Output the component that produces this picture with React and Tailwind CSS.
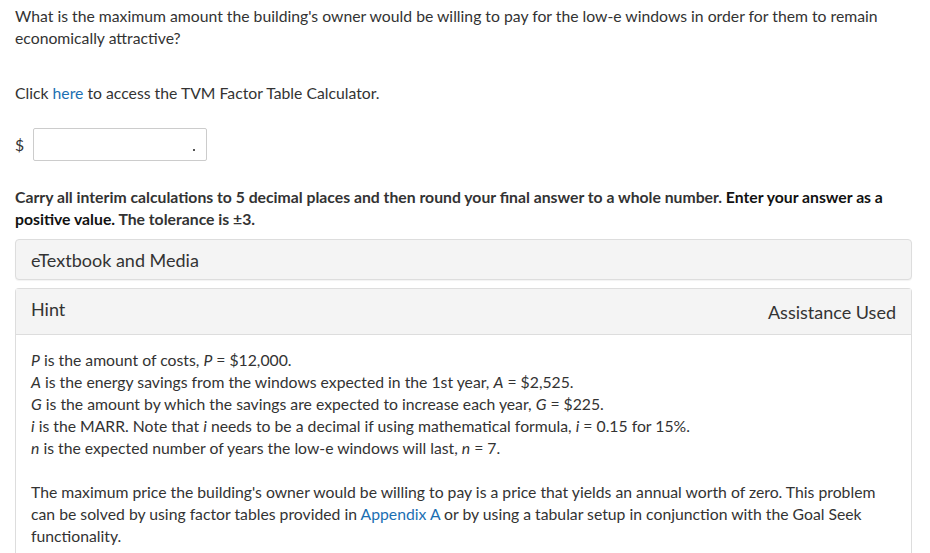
import React from 'react';

const Link = ({ children }) => (
  <a href="#" className="text-[#1b6fb3]">{children}</a>
);

export default function App() {
  return (
    <div className="min-h-screen bg-white px-[15px] pt-[5px] font-['Lato','Liberation_Sans',sans-serif] text-[15.75px] leading-[22px] text-[#333]">
      <p className="pr-[30px]">
        What is the maximum amount the building's owner would be willing to pay for the low-e windows in order for them to remain economically attractive?
      </p>

      <p className="mt-[33px]">
        Click <Link>here</Link> to access the TVM Factor Table Calculator.
      </p>

      <div className="mt-[24px] flex items-center gap-[10px]">
        <span className="w-[8px]">$</span>
        <div className="relative h-[33px] w-[174px] rounded-[2px] border border-[#ccc] bg-white">
          <span className="absolute right-[11px] top-[20px] h-[2px] w-[2px] bg-[#555]" />
        </div>
      </div>

      <p className="mt-[25px] pr-[10px] font-bold">
        Carry all interim calculations to 5 decimal places and then round your final answer to a whole number.{' '}
        <span className="text-[#111]">Enter your answer as a positive value.</span> The tolerance is ±3.
      </p>

      <div className="mr-[3px] mt-[9px] flex h-[41px] items-center rounded-[4px] border border-[#ddd] bg-[#f4f4f4] px-[15px] text-[18px] shadow-[0_1px_1px_rgba(0,0,0,0.05)]">
        eTextbook and Media
      </div>

      <div className="mr-[3px] mt-[8px] rounded-t-[4px] border border-b-0 border-[#ddd]">
        <div className="flex h-[46px] items-center justify-between border-b border-[#ddd] bg-[#f4f4f4] px-[15px] text-[18px]">
          <span className="-mt-[6px]">Hint</span>
          <span>Assistance Used</span>
        </div>
        <div className="px-[15px] pt-[14px] pb-[10px]">
          <p>
            <i>P</i> is the amount of costs, <i>P</i> = $12,000.
            <br />
            <i>A</i> is the energy savings from the windows expected in the 1st year, <i>A</i> = $2,525.
            <br />
            <i>G</i> is the amount by which the savings are expected to increase each year, <i>G</i> = $225.
            <br />
            <i>i</i> is the MARR. Note that <i>i</i> needs to be a decimal if using mathematical formula, <i>i</i> = 0.15 for 15%.
            <br />
            <i>n</i> is the expected number of years the low-e windows will last, <i>n</i> = 7.
          </p>
          <p className="mt-[22px] pr-[20px]">
            The maximum price the building's owner would be willing to pay is a price that yields an annual worth of zero. This problem can be solved by using factor tables provided in <Link>Appendix A</Link> or by using a tabular setup in conjunction with the Goal Seek functionality.
          </p>
        </div>
      </div>
    </div>
  );
}
